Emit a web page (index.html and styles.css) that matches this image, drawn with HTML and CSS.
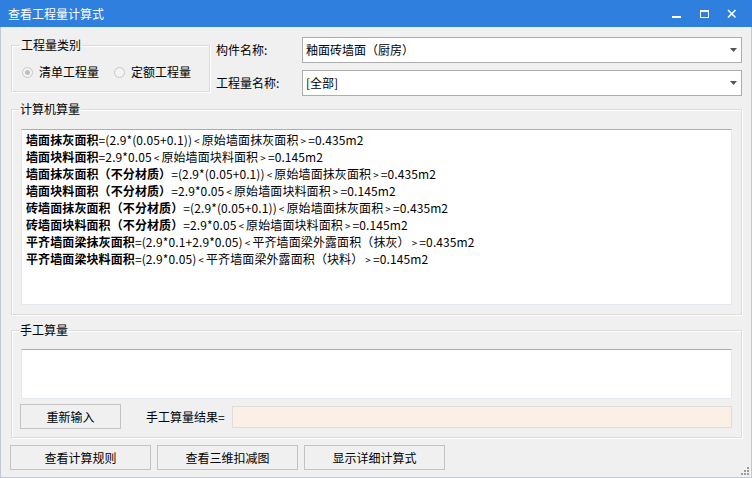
FILE: index.html
```html
<!DOCTYPE html>
<html lang="zh-CN">
<head>
<meta charset="utf-8">
<title>查看工程量计算式</title>
<link rel="stylesheet" href="styles.css">
</head>
<body>
<div class="window">
  <div class="titlebar">
    <span class="title">查看工程量计算式</span>
    <div class="controls">
      <svg class="ctl" width="28" height="27" viewBox="0 0 28 27"><rect x="10" y="16" width="9" height="2" fill="#fff"/></svg>
      <svg class="ctl" width="28" height="27" viewBox="0 0 28 27"><rect x="10.5" y="10.5" width="8" height="7" fill="none" stroke="#fff" stroke-width="1"/><rect x="10" y="10" width="9" height="2" fill="#fff"/></svg>
      <svg class="ctl" width="28" height="27" viewBox="0 0 28 27"><path d="M10 10 L17.5 17.5 M17.5 10 L10 17.5" stroke="#fff" stroke-width="1.6"/></svg>
    </div>
  </div>
  <div class="content">
    <div class="top">
      <fieldset class="group type-group">
        <legend>工程量类别</legend>
        <div class="radios">
          <span class="radio"><span class="dot checked"></span>清单工程量</span>
          <span class="radio"><span class="dot"></span>定额工程量</span>
        </div>
      </fieldset>
      <div class="fields">
        <div class="field-row">
          <span class="field-label">构件名称:</span>
          <div class="combo"><span>釉面砖墙面（厨房）</span><svg class="arrow" width="7" height="4" viewBox="0 0 7 4"><path d="M0 0 H7 L3.5 4 Z" fill="#555"/></svg></div>
        </div>
        <div class="field-row">
          <span class="field-label">工程量名称:</span>
          <div class="combo"><span>[全部]</span><svg class="arrow" width="7" height="4" viewBox="0 0 7 4"><path d="M0 0 H7 L3.5 4 Z" fill="#555"/></svg></div>
        </div>
      </div>
    </div>

    <fieldset class="group calc-group">
      <legend>计算机算量</legend>
      <div class="textbox calc-box">
        <div class="line"><b>墙面抹灰面积</b>=(2.9*(0.05+0.1))<span class="lt">&lt;</span>原始墙面抹灰面积<span class="gt">&gt;</span>=0.435m2</div>
        <div class="line"><b>墙面块料面积</b>=2.9*0.05<span class="lt">&lt;</span>原始墙面块料面积<span class="gt">&gt;</span>=0.145m2</div>
        <div class="line"><b>墙面抹灰面积（不分材质）</b>=(2.9*(0.05+0.1))<span class="lt">&lt;</span>原始墙面抹灰面积<span class="gt">&gt;</span>=0.435m2</div>
        <div class="line"><b>墙面块料面积（不分材质）</b>=2.9*0.05<span class="lt">&lt;</span>原始墙面块料面积<span class="gt">&gt;</span>=0.145m2</div>
        <div class="line"><b>砖墙面抹灰面积（不分材质）</b>=(2.9*(0.05+0.1))<span class="lt">&lt;</span>原始墙面抹灰面积<span class="gt">&gt;</span>=0.435m2</div>
        <div class="line"><b>砖墙面块料面积（不分材质）</b>=2.9*0.05<span class="lt">&lt;</span>原始墙面块料面积<span class="gt">&gt;</span>=0.145m2</div>
        <div class="line"><b>平齐墙面梁抹灰面积</b>=(2.9*0.1+2.9*0.05)<span class="lt">&lt;</span>平齐墙面梁外露面积（抹灰）<span class="gt">&gt;</span>=0.435m2</div>
        <div class="line"><b>平齐墙面梁块料面积</b>=(2.9*0.05)<span class="lt">&lt;</span>平齐墙面梁外露面积（块料）<span class="gt">&gt;</span>=0.145m2</div>
      </div>
    </fieldset>

    <fieldset class="group manual-group">
      <legend>手工算量</legend>
      <div class="textbox manual-box"></div>
      <div class="manual-row">
        <button class="btn reinput">重新输入</button>
        <span class="result-label">手工算量结果=</span>
        <div class="result-field"></div>
      </div>
    </fieldset>

    <div class="bottom-buttons">
      <button class="btn wide">查看计算规则</button>
      <button class="btn wide">查看三维扣减图</button>
      <button class="btn wide">显示详细计算式</button>
    </div>
  </div>
  <svg class="grip" width="10" height="10" viewBox="0 0 10 10">
    <rect x="7" y="1" width="2" height="2" fill="#9a9a9a"/>
    <rect x="4" y="4" width="2" height="2" fill="#9a9a9a"/>
    <rect x="7" y="4" width="2" height="2" fill="#9a9a9a"/>
    <rect x="1" y="7" width="2" height="2" fill="#9a9a9a"/>
    <rect x="4" y="7" width="2" height="2" fill="#9a9a9a"/>
    <rect x="7" y="7" width="2" height="2" fill="#9a9a9a"/>
  </svg>
</div>
</body>
</html>
```

FILE: styles.css
```css
* { box-sizing: border-box; }

html, body {
  margin: 0;
  padding: 0;
  width: 752px;
  height: 478px;
  overflow: hidden;
  background: #f0f0f0;
}

body {
  font-family: "Noto Sans CJK SC", "Microsoft YaHei", sans-serif;
  font-size: 12px;
  color: #000;
}

.window {
  position: relative;
  width: 752px;
  height: 478px;
  background: #f0f0f0;
  border: 1px solid #c3cad6;
  border-top: none;
  display: flex;
  flex-direction: column;
}

.titlebar {
  height: 27px;
  margin: 0 -1px;
  background: #2e7fde;
  display: flex;
  align-items: center;
  justify-content: space-between;
  flex: none;
}

.title {
  color: #fff;
  font-size: 12px;
  line-height: 27px;
  padding-left: 8px;
}

.controls {
  display: flex;
  padding-right: 6px;
}

.ctl { display: block; }

.content {
  padding: 9px 9px 0 10px;
  display: flex;
  flex-direction: column;
}

.top {
  display: flex;
  align-items: flex-start;
}

.group {
  margin: 0;
  border: 1px solid #dcdcdc;
  box-shadow: inset 1px 1px 0 #fff, 1px 1px 0 #fff;
  min-width: 0;
}

.group legend {
  padding: 0 1px;
  margin-left: -2px;
  line-height: 14px;
  height: 14px;
  font-size: 12px;
}

.type-group {
  width: 199px;
  margin-top: 2px;
  padding: 12px 8px 11px 10px;
}

.radios {
  display: flex;
  align-items: center;
  gap: 15px;
  height: 16px;
}

.radio {
  display: flex;
  align-items: center;
  gap: 6px;
  line-height: 16px;
}

.dot {
  width: 11px;
  height: 11px;
  border: 1px solid #c6c6c6;
  border-radius: 50%;
  background: #f4f4f4;
  position: relative;
}

.dot.checked::after {
  content: "";
  position: absolute;
  left: 2px;
  top: 2px;
  width: 5px;
  height: 5px;
  border-radius: 50%;
  background: #c0c0c0;
}

.fields {
  margin-left: 6px;
  flex: 1;
  display: flex;
  flex-direction: column;
  gap: 6px;
}

.field-row {
  display: flex;
  align-items: center;
}

.field-label {
  width: 86px;
  line-height: 26px;
  padding-top: 1px;
}

.combo {
  flex: 1;
  height: 26px;
  background: #fff;
  border: 1px solid #adadad;
  display: flex;
  align-items: center;
  justify-content: space-between;
  padding: 0 4px 0 3px;
}

.combo span { line-height: 24px; }

.arrow { display: block; margin-top: 1px; }

.calc-group {
  margin-top: 6px;
  padding: 13px 9px 9px 9px;
}

.textbox {
  background: #fff;
  border: 1px solid #e3e9ef;
  border-top-color: #abadb3;
}

.calc-box {
  height: 176px;
  padding: 1px 4px 0 4px;
}

.line {
  height: 17px;
  line-height: 17px;
  white-space: nowrap;
  letter-spacing: 0.1px;
}

.line b { font-weight: 700; }

.lt, .gt {
  font-size: 10px;
  line-height: 10px;
  padding: 0 2px;
}

.manual-group {
  margin-top: 8px;
  padding: 12px 9px 8px 9px;
}

.manual-box {
  height: 50px;
}

.manual-row {
  margin-top: 5px;
  display: flex;
  align-items: center;
  height: 25px;
}

.btn {
  font-family: inherit;
  font-size: 12px;
  color: #000;
  background: #f0f0f0;
  border: 1px solid #c3c3c3;
  border-radius: 0;
  padding: 0;
  margin: 0;
  height: 25px;
}

.reinput {
  width: 101px;
  margin-left: -1px;
}

.result-label {
  margin-left: 25px;
  width: 86px;
}

.result-field {
  flex: 1;
  height: 22px;
  background: #faf0e6;
  border: 1px solid #e0dcd8;
}

.bottom-buttons {
  margin-top: 7px;
  margin-left: -1px;
  display: flex;
  gap: 6px;
}

.btn.wide {
  width: 141px;
}

.grip {
  position: absolute;
  right: 1px;
  bottom: 1px;
}
```
